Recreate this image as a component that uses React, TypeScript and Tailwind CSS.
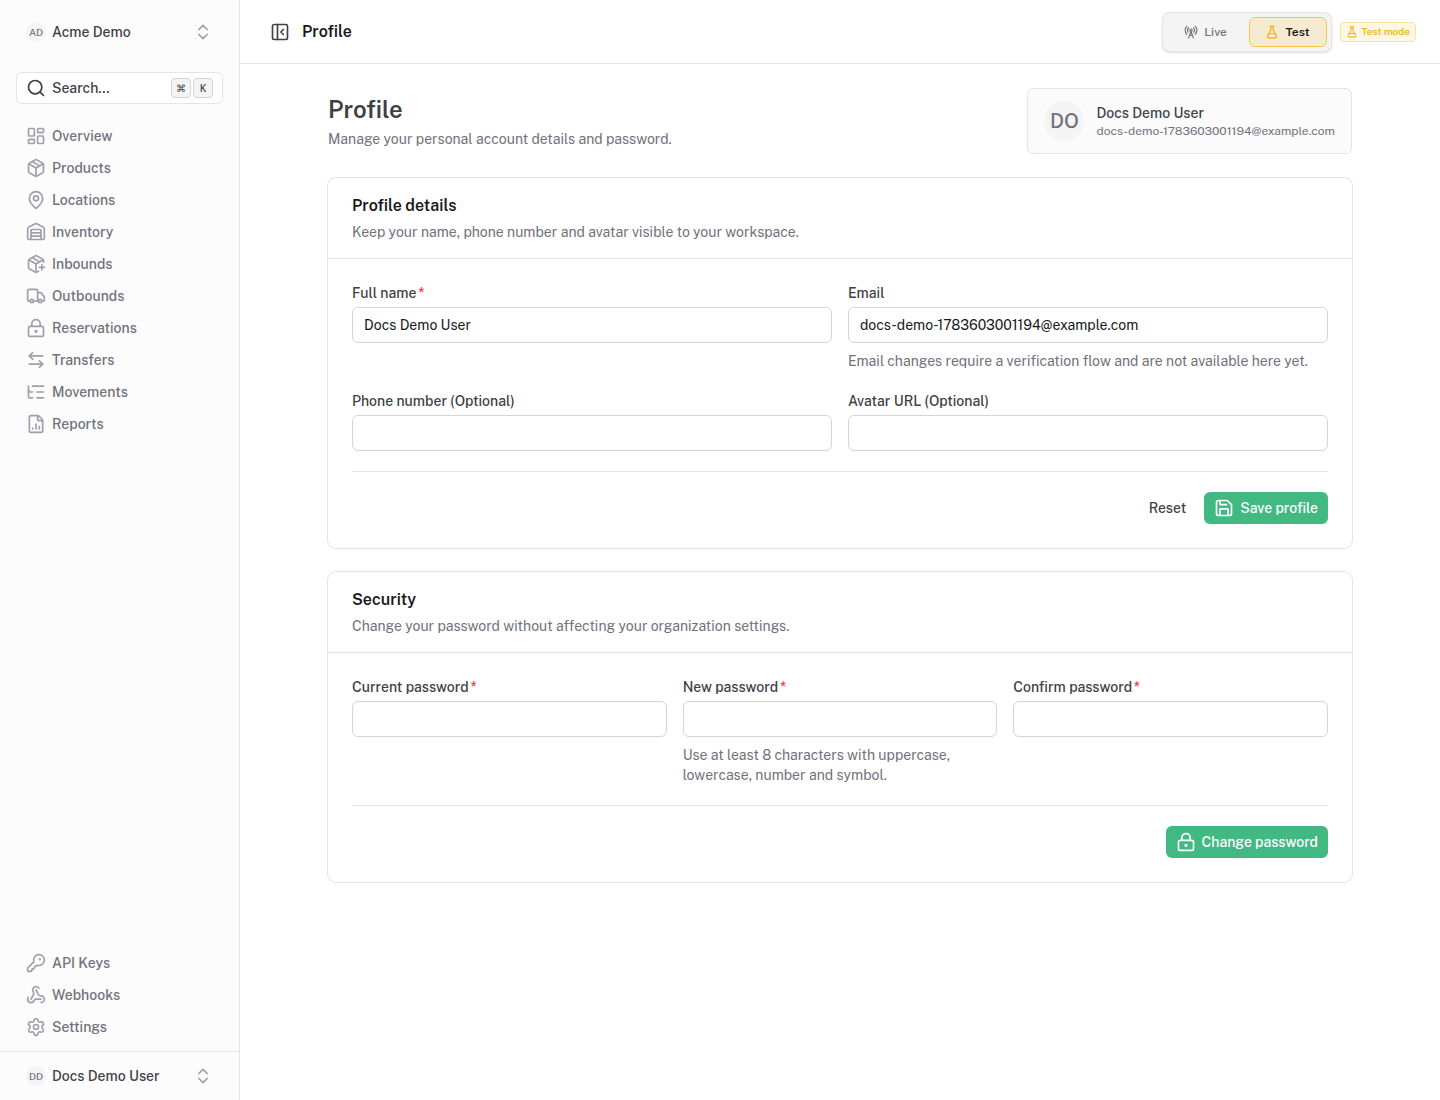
import type { ReactNode } from "react";
import {
  ArrowLeftRight,
  ChevronsUpDown,
  FileChartColumn,
  FlaskConical,
  KeyRound,
  LayoutDashboard,
  ListTree,
  LockKeyhole,
  MapPin,
  Package,
  PackagePlus,
  PanelLeftClose,
  RadioTower,
  Save,
  Search,
  Settings,
  Truck,
  Warehouse,
  Webhook,
  type LucideIcon,
} from "lucide-react";

type NavItem = {
  label: string;
  icon: LucideIcon;
};

const mainNav: NavItem[] = [
  { label: "Overview", icon: LayoutDashboard },
  { label: "Products", icon: Package },
  { label: "Locations", icon: MapPin },
  { label: "Inventory", icon: Warehouse },
  { label: "Inbounds", icon: PackagePlus },
  { label: "Outbounds", icon: Truck },
  { label: "Reservations", icon: LockKeyhole },
  { label: "Transfers", icon: ArrowLeftRight },
  { label: "Movements", icon: ListTree },
  { label: "Reports", icon: FileChartColumn },
];

const footerNav: NavItem[] = [
  { label: "API Keys", icon: KeyRound },
  { label: "Webhooks", icon: Webhook },
  { label: "Settings", icon: Settings },
];

function NavList({ items, label }: { items: NavItem[]; label: string }) {
  return (
    <nav aria-label={label}>
      <ul>
        {items.map(({ label, icon: Icon }) => (
          <li key={label}>
            <a
              href="#"
              className="flex h-8 items-center gap-1.5 px-2.5 text-sm font-medium text-zinc-500 hover:text-zinc-900"
            >
              <Icon className="size-5 text-zinc-400" />
              {label}
            </a>
          </li>
        ))}
      </ul>
    </nav>
  );
}

function AccountButton({ initials, name }: { initials: string; name: string }) {
  return (
    <button
      type="button"
      className="flex h-8 w-full items-center gap-1.5 px-2.5 text-sm font-medium text-zinc-700"
    >
      <span className="flex size-5 items-center justify-center rounded-full bg-zinc-100 text-[10px] text-zinc-500">
        {initials}
      </span>
      {name}
      <ChevronsUpDown className="ml-auto size-5 text-zinc-400" />
    </button>
  );
}

function Kbd({ children }: { children: ReactNode }) {
  return (
    <kbd className="flex size-5 items-center justify-center rounded-sm border border-zinc-300 bg-zinc-100 font-sans text-[10px] font-medium text-zinc-700">
      {children}
    </kbd>
  );
}

function Sidebar() {
  return (
    <aside className="sticky top-0 flex h-screen w-60 shrink-0 flex-col border-r border-zinc-200 bg-[#fcfcfc]">
      <div className="flex h-16 items-center px-4">
        <AccountButton initials="AD" name="Acme Demo" />
      </div>
      <div className="flex flex-1 flex-col px-4 py-2">
        <button
          type="button"
          className="mb-4 flex h-8 items-center gap-1.5 rounded-md border border-zinc-200 bg-white px-[9px] text-sm font-medium text-zinc-700"
        >
          <Search className="size-5" />
          Search...
          <span className="ml-auto flex gap-0.5">
            <Kbd>⌘</Kbd>
            <Kbd>K</Kbd>
          </span>
        </button>
        <NavList items={mainNav} label="Main" />
        <div className="mt-auto">
          <NavList items={footerNav} label="Workspace" />
        </div>
      </div>
      <div className="border-t border-zinc-200 px-4 py-2">
        <AccountButton initials="DD" name="Docs Demo User" />
      </div>
    </aside>
  );
}

function Topbar() {
  return (
    <header className="flex h-16 items-center border-b border-zinc-200 px-6">
      <button type="button" aria-label="Collapse sidebar" className="p-1.5 text-zinc-700">
        <PanelLeftClose className="size-5" />
      </button>
      <p className="ml-1.5 font-semibold text-zinc-900">Profile</p>
      <div className="ml-auto flex items-center gap-2">
        <div className="flex gap-1 rounded-lg border border-zinc-200 bg-zinc-100 p-1 text-xs shadow-sm">
          <button
            type="button"
            className="flex h-[30px] w-[78px] items-center justify-center gap-1.5 rounded-md font-medium text-zinc-500"
          >
            <RadioTower className="size-3.5" />
            Live
          </button>
          <button
            type="button"
            className="flex h-[30px] w-[78px] items-center justify-center gap-1.5 rounded-md border border-[#f3c84b] bg-[#f6ebd0] font-semibold text-zinc-900"
          >
            <FlaskConical className="size-3.5 text-[#f0b100]" />
            Test
          </button>
        </div>
        <span className="flex h-5 items-center gap-1 rounded-sm border border-[#fbe29f] bg-[#fef7e5] px-[5px] text-[10px] font-medium text-[#f0b100]">
          <FlaskConical className="size-3" />
          Test mode
        </span>
      </div>
    </header>
  );
}

type FieldProps = {
  id: string;
  label: string;
  type?: string;
  value?: string;
  required?: boolean;
  help?: string;
};

function Field({ id, label, type = "text", value, required, help }: FieldProps) {
  return (
    <div className="text-sm">
      <label htmlFor={id} className="block font-medium text-zinc-700">
        {label}
        {required ? <span className="ml-0.5 text-red-500">*</span> : null}
      </label>
      <input
        id={id}
        type={type}
        defaultValue={value}
        required={required}
        className="mt-1 h-9 w-full rounded-md border border-zinc-300 bg-white px-[11px] text-zinc-900 outline-none focus:border-[#42b883]"
      />
      {help ? <p className="mt-2 text-zinc-500">{help}</p> : null}
    </div>
  );
}

function Card({
  title,
  description,
  children,
}: {
  title: string;
  description: string;
  children: ReactNode;
}) {
  return (
    <section className="rounded-lg bg-white ring ring-zinc-200">
      <div className="border-b border-zinc-200 px-6 py-4">
        <h2 className="font-semibold text-zinc-900">{title}</h2>
        <p className="mt-1 text-sm text-zinc-500">{description}</p>
      </div>
      <form className="space-y-5 p-6" onSubmit={(e) => e.preventDefault()}>
        {children}
      </form>
    </section>
  );
}

function FormActions({ children }: { children: ReactNode }) {
  return (
    <div className="flex justify-end gap-2 border-t border-zinc-200 pt-5 text-sm font-medium">
      {children}
    </div>
  );
}

function SubmitButton({ icon: Icon, children }: { icon: LucideIcon; children: ReactNode }) {
  return (
    <button
      type="submit"
      className="flex h-8 items-center gap-1.5 rounded-md bg-[#42b883] px-2.5 text-white"
    >
      <Icon className="size-5" />
      {children}
    </button>
  );
}

export default function App() {
  return (
    <div className="flex min-h-screen bg-white font-['Public_Sans',Inter,sans-serif] text-zinc-700 antialiased">
      <Sidebar />
      <div className="min-w-0 flex-1">
        <Topbar />
        <main className="mx-auto flex max-w-5xl flex-col gap-6 py-6">
          <div className="flex items-center justify-between">
            <div>
              <h1 className="text-2xl font-semibold">Profile</h1>
              <p className="mt-1 text-sm text-zinc-500">
                Manage your personal account details and password.
              </p>
            </div>
            <div className="flex items-center gap-3 rounded-md border border-zinc-200 bg-[#fbfbfb] px-4 py-3">
              <span className="flex size-10 items-center justify-center rounded-full bg-zinc-100 text-xl font-medium text-zinc-500">
                DO
              </span>
              <div>
                <p className="text-sm font-medium">Docs Demo User</p>
                <p className="text-xs text-zinc-500">docs-demo-1783603001194@example.com</p>
              </div>
            </div>
          </div>

          <Card
            title="Profile details"
            description="Keep your name, phone number and avatar visible to your workspace."
          >
            <div className="grid grid-cols-2 gap-x-4 gap-y-5">
              <Field id="full-name" label="Full name" value="Docs Demo User" required />
              <Field
                id="email"
                label="Email"
                type="email"
                value="docs-demo-1783603001194@example.com"
                help="Email changes require a verification flow and are not available here yet."
              />
              <Field id="phone" label="Phone number (Optional)" type="tel" />
              <Field id="avatar-url" label="Avatar URL (Optional)" type="url" />
            </div>
            <FormActions>
              <button type="reset" className="h-8 px-2.5">
                Reset
              </button>
              <SubmitButton icon={Save}>Save profile</SubmitButton>
            </FormActions>
          </Card>

          <Card
            title="Security"
            description="Change your password without affecting your organization settings."
          >
            <div className="grid grid-cols-3 gap-4">
              <Field id="current-password" label="Current password" type="password" required />
              <Field
                id="new-password"
                label="New password"
                type="password"
                required
                help="Use at least 8 characters with uppercase, lowercase, number and symbol."
              />
              <Field id="confirm-password" label="Confirm password" type="password" required />
            </div>
            <FormActions>
              <SubmitButton icon={LockKeyhole}>Change password</SubmitButton>
            </FormActions>
          </Card>
        </main>
      </div>
    </div>
  );
}
